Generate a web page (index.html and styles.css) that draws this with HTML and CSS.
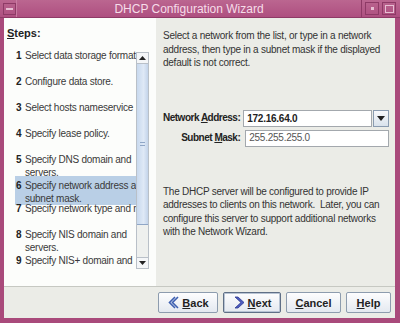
FILE: index.html
```html
<!DOCTYPE html>
<html lang="en">
<head>
  <meta charset="UTF-8" />
  <title>DHCP Configuration Wizard</title>
  <link rel="stylesheet" href="styles.css">
</head>
<body>

<div class="window">
  <div class="titlebar">
    <div class="tb-menu"><span></span></div>
    <div class="tb-title">DHCP Configuration Wizard</div>
    <div class="tb-btn tb-min"><span></span></div>
    <div class="tb-btn tb-max"><span></span></div>
  </div>

  <div class="body">
    <div class="steps">
      <div class="steps-label"><u>S</u>teps:</div>
      <div class="scroll">
        <ul class="list">
          <li><b>1</b><span>Select data storage format.<br>&nbsp;</span></li>
          <li><b>2</b><span>Configure data store.<br>&nbsp;</span></li>
          <li><b>3</b><span>Select hosts nameservice<br>&nbsp;</span></li>
          <li><b>4</b><span>Specify lease policy.<br>&nbsp;</span></li>
          <li><b>5</b><span>Specify DNS domain and<br>servers.</span></li>
          <li class="selected"><b>6</b><span>Specify network address and<br>subnet mask.</span></li>
          <li><b>7</b><span>Specify network type and router.<br>&nbsp;</span></li>
          <li><b>8</b><span>Specify NIS domain and<br>servers.</span></li>
          <li class="last"><b>9</b><span>Specify NIS+ domain and</span></li>
        </ul>
        <div class="vscroll">
          <div class="arrow up"><svg width="7" height="4" viewBox="0 0 7 4"><path d="M0 4 L3.5 0 L7 4 Z" fill="#222"/></svg></div>
          <div class="thumb"><span></span></div>
          <div class="track"></div>
          <div class="arrow down"><svg width="7" height="4" viewBox="0 0 7 4"><path d="M0 0 L3.5 4 L7 0 Z" fill="#222"/></svg></div>
        </div>
      </div>
    </div>

    <div class="main">
      <p class="intro">Select a network from the list, or type in a network<br>address, then type in a subnet mask if the displayed<br>default is not correct.</p>

      <div class="form">
        <label>Network <u>A</u>ddress:</label>
        <div class="combo">
          <div class="combo-value">172.16.64.0</div>
          <div class="combo-btn"><svg width="8" height="5" viewBox="0 0 8 5"><path d="M0 0 L4 5 L8 0 Z" fill="#222"/></svg></div>
        </div>
        <label>Subnet <u>M</u>ask:</label>
        <div class="field">255.255.255.0</div>
      </div>

      <p class="note">The DHCP server will be configured to provide IP<br>addresses to clients on this network.&nbsp; Later, you can<br>configure this server to support additional networks<br>with the Network Wizard.</p>
    </div>
  </div>

  <div class="buttons">
    <button class="btn"><svg width="12" height="13" viewBox="0 0 12 13"><path d="M8 1 L2.5 6.5 L8 12 M11 1 L5.5 6.5 L11 12" fill="none" stroke="#3d5fb0" stroke-width="1.6"/></svg><span><u>B</u>ack</span></button>
    <button class="btn default"><svg width="12" height="13" viewBox="0 0 12 13"><path d="M2 1 L8 6.5 L2 12 L5 12 L11 6.5 L5 1 Z" fill="#4d5bc0" stroke="#2d3a90" stroke-width="0.8"/></svg><span><u>N</u>ext</span></button>
    <button class="btn"><span><u>C</u>ancel</span></button>
    <button class="btn"><span><u>H</u>elp</span></button>
  </div>
</div>

</body>
</html>
```

FILE: styles.css
```css
body {
  margin: 0;
  font-family: 'Liberation Sans', Arial, sans-serif;
  color: #2a2a2a;
}
.window {
  width: 400px;
  height: 323px;
  box-sizing: border-box;
  background: #a94a7b;
  padding: 0 5px 5px 4px;
  display: flex;
  flex-direction: column;
}
.titlebar {
  height: 18px;
  margin: 0 -5px 0 -4px;
  display: flex;
  align-items: center;
  background: linear-gradient(#bb6690, #ae4f80);
  border-bottom: 1px solid #8e3a66;
  box-sizing: border-box;
  padding: 0 4px 0 3px;
}
.tb-menu {
  width: 13px;
  height: 12px;
  border: 1px solid #8e3a66;
  box-sizing: border-box;
  display: flex;
  align-items: center;
  justify-content: center;
}
.tb-menu span {
  width: 7px;
  height: 2px;
  background: #e7bfd3;
}
.tb-title {
  flex: 1;
  text-align: center;
  color: #f6dde9;
  font-size: 12px;
  border-left: 1px solid #c97ca2;
  border-right: 1px solid #8e3a66;
  height: 100%;
  line-height: 18px;
}
.tb-btn {
  width: 14px;
  height: 13px;
  margin-left: 3px;
  border: 1px solid #8e3a66;
  box-sizing: border-box;
  display: flex;
  align-items: center;
  justify-content: center;
}
.tb-min span {
  width: 3px;
  height: 3px;
  background: #e7bfd3;
}
.tb-max span {
  width: 9px;
  height: 8px;
  border: 1px solid #e7bfd3;
  box-sizing: border-box;
}
.body {
  display: flex;
  height: 268px;
}
.steps {
  width: 152px;
  background: #fcfdfb;
  box-sizing: border-box;
  padding: 9px 0 0 3px;
}
.steps-label {
  font-size: 11px;
  font-weight: bold;
  line-height: 13px;
  color: #222;
}
.scroll {
  margin: 9px 0 0 8px;
  height: 220px;
  width: 134px;
  position: relative;
  overflow: hidden;
}
.list {
  list-style: none;
  margin: 0;
  padding: 0;
  font-size: 10px;
  line-height: 13px;
  letter-spacing: -0.25px;
}
.list li {
  display: flex;
  height: 26px;
  white-space: nowrap;
  padding-left: 1px;
}
.list li.last {
  height: 13px;
}
.list li b {
  width: 9px;
  flex: none;
  color: #222;
}
.list li span {
  color: #3a3a3a;
}
.list li.selected {
  background: #b9cfe6;
  margin-top: -3px;
  padding-top: 3px;
}
.list li.selected + li {
  margin-top: -3px;
}
.vscroll {
  position: absolute;
  right: 0;
  top: 3px;
  bottom: 0;
  width: 13px;
  display: flex;
  flex-direction: column;
  background: #eef0ee;
  border: 1px solid #b9c0c8;
  box-sizing: border-box;
}
.arrow {
  height: 10px;
  flex: none;
  display: flex;
  align-items: center;
  justify-content: center;
  background: #f4f6f8;
}
.arrow.up {
  border-bottom: 1px solid #b9c0c8;
}
.arrow.down {
  border-top: 1px solid #b9c0c8;
}
.thumb {
  height: 160px;
  flex: none;
  background: linear-gradient(90deg, #c8d9ee, #dfe9f6 60%, #c3d4ea);
  border-bottom: 1px solid #8fa6c6;
  display: flex;
  align-items: center;
  justify-content: center;
}
.thumb span {
  width: 5px;
  height: 4px;
  border-top: 1px solid #8fa6c6;
  border-bottom: 1px solid #8fa6c6;
  box-sizing: border-box;
}
.track {
  flex: 1;
}
.main {
  flex: 1;
  background: #ebece7;
  padding: 11px 6px 0 7px;
  font-size: 10px;
  line-height: 13.5px;
  letter-spacing: -0.25px;
  color: #333;
  white-space: nowrap;
}
.main p {
  margin: 0;
}
.form {
  display: grid;
  grid-template-columns: auto 1fr;
  column-gap: 3px;
  row-gap: 3px;
  align-items: center;
  margin-top: 40px;
}
.form label {
  text-align: right;
  font-weight: bold;
  font-size: 10px;
  letter-spacing: -0.5px;
  color: #222;
}
.combo {
  display: flex;
  height: 17px;
}
.combo-value {
  flex: 1;
  background: #fff;
  border: 1px solid #a3a8ad;
  font-weight: bold;
  font-size: 10px;
  line-height: 15px;
  padding-left: 3px;
  color: #222;
}
.combo-btn {
  width: 14px;
  margin-left: 1px;
  background: linear-gradient(#f8f9fb, #d9e2ec);
  border: 1px solid #8a9bb0;
  display: flex;
  align-items: center;
  justify-content: center;
}
.field {
  height: 15px;
  background: #fff;
  border: 1px solid #a3a8ad;
  padding-left: 3px;
  line-height: 14px;
  color: #555;
  margin-left: 2px;
}
.note {
  margin-top: 38px !important;
}
.buttons {
  height: 32px;
  background: #ebece7;
  border-top: 1px solid #c6c8c2;
  box-sizing: border-box;
  display: flex;
  justify-content: flex-end;
  align-items: flex-start;
  gap: 5px;
  padding: 5px 4px 0;
}
.btn {
  height: 21px;
  display: flex;
  align-items: center;
  justify-content: center;
  gap: 3px;
  border: 1px solid #8d9cae;
  border-radius: 2px;
  background: linear-gradient(#fdfdfe, #e4e9f0);
  font-family: 'Liberation Sans', Arial, sans-serif;
  font-size: 11px;
  font-weight: bold;
  color: #222;
  padding: 0;
}
.btn:nth-child(1) { width: 60px; }
.btn:nth-child(2) { width: 58px; }
.btn:nth-child(3) { width: 55px; }
.btn:nth-child(4) { width: 45px; }
.btn.default {
  border: 1px solid #5f6f86;
  box-shadow: inset 0 0 0 1px #b8c4d4;
}
```
